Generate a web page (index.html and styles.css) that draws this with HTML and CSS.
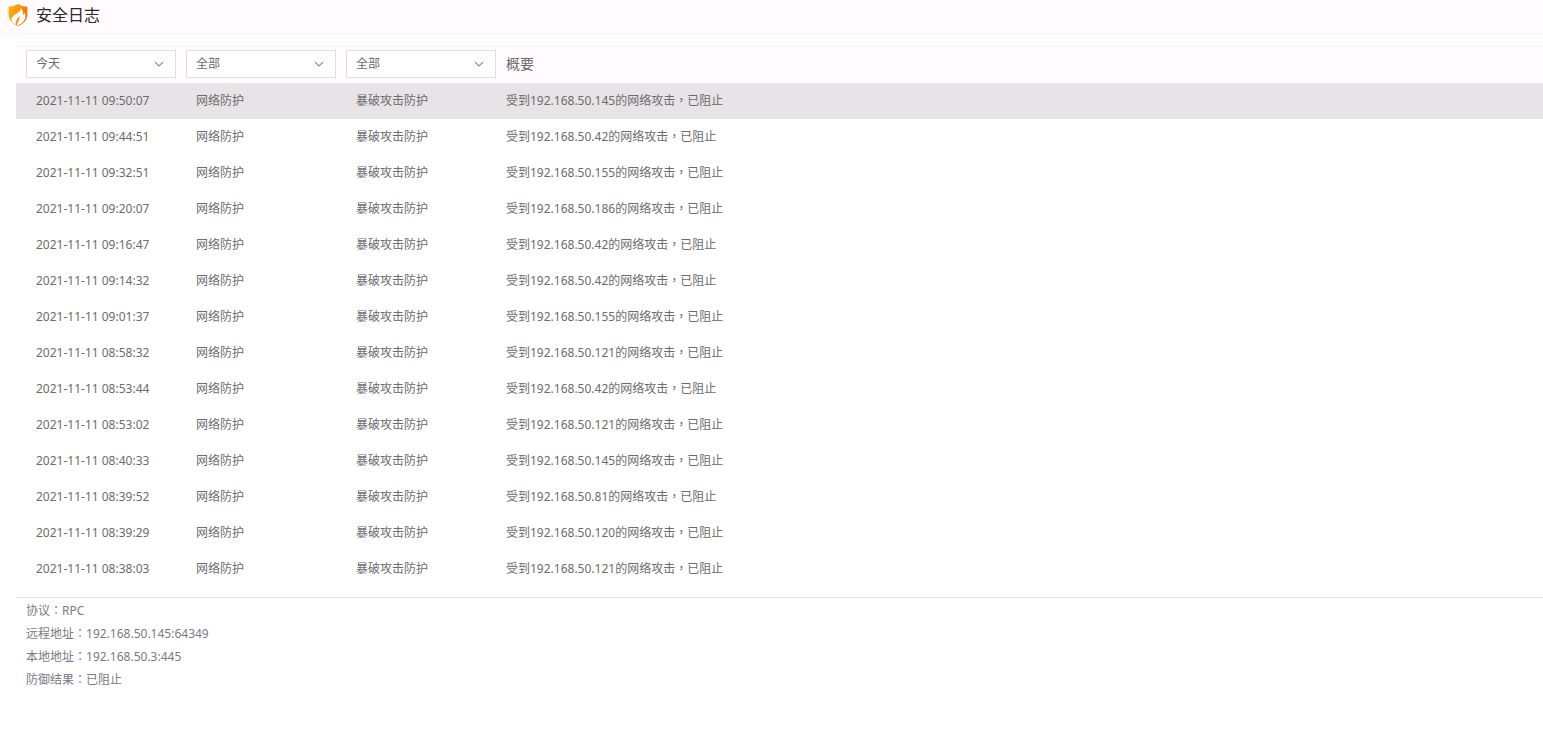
FILE: index.html
```html
<!DOCTYPE html>
<html lang="zh-CN">
<head>
<meta charset="utf-8">
<title>安全日志</title>
<link rel="stylesheet" href="styles.css">
</head>
<body>
<header class="titlebar">
  <svg class="logo" viewBox="0 0 20 22" aria-hidden="true">
    <defs>
      <linearGradient id="shield" x1="0" y1="0" x2="1" y2="0.3">
        <stop offset="0" stop-color="#ffb21a"/>
        <stop offset="0.5" stop-color="#ff9a08"/>
        <stop offset="1" stop-color="#f87300"/>
      </linearGradient>
    </defs>
    <path fill="url(#shield)" d="M10 0C13 2 16 2.6 19.4 2.6V10C19.4 16 15.5 20 10 22C4.500 20 .6 16 .6 10V2.600C4 2.600 7 2 10 0Z"/>
    <path fill="#fff" d="M12.800 4C13 7.200 10 8.600 7 10.600C3 13.500 2.600 16.500 5.200 19.200L7.800 20.800C7 17.600 8.800 15.200 11.600 12C11.800 15 11 16.400 9.800 18.200C9 19.600 8.700 20.600 9.300 21.600C14 19.800 17.400 16.500 17.400 12.600C17.400 11 17 9.600 16.400 8.600C16.200 9.800 15.800 10.400 15 11C15.200 8 14.800 5.800 12.800 4Z"/>
  </svg>
  <h1 class="title">安全日志</h1>
</header>
<main class="content">
  <table class="log">
    <colgroup><col class="col-fixed"><col class="col-fixed"><col class="col-fixed"><col></colgroup>
    <thead>
      <tr>
        <th scope="col"><select class="filter" aria-label="时间"><option>今天</option></select></th>
        <th scope="col"><select class="filter" aria-label="类型"><option>全部</option></select></th>
        <th scope="col"><select class="filter" aria-label="项目"><option>全部</option></select></th>
        <th scope="col">概要</th>
      </tr>
    </thead>
    <tbody>
      <tr class="selected"><td>2021-11-11 09:50:07</td><td>网络防护</td><td>暴破攻击防护</td><td>受到192.168.50.145的网络攻击<span class="punct" lang="zh-TW">，</span>已阻止</td></tr>
      <tr><td>2021-11-11 09:44:51</td><td>网络防护</td><td>暴破攻击防护</td><td>受到192.168.50.42的网络攻击<span class="punct" lang="zh-TW">，</span>已阻止</td></tr>
      <tr><td>2021-11-11 09:32:51</td><td>网络防护</td><td>暴破攻击防护</td><td>受到192.168.50.155的网络攻击<span class="punct" lang="zh-TW">，</span>已阻止</td></tr>
      <tr><td>2021-11-11 09:20:07</td><td>网络防护</td><td>暴破攻击防护</td><td>受到192.168.50.186的网络攻击<span class="punct" lang="zh-TW">，</span>已阻止</td></tr>
      <tr><td>2021-11-11 09:16:47</td><td>网络防护</td><td>暴破攻击防护</td><td>受到192.168.50.42的网络攻击<span class="punct" lang="zh-TW">，</span>已阻止</td></tr>
      <tr><td>2021-11-11 09:14:32</td><td>网络防护</td><td>暴破攻击防护</td><td>受到192.168.50.42的网络攻击<span class="punct" lang="zh-TW">，</span>已阻止</td></tr>
      <tr><td>2021-11-11 09:01:37</td><td>网络防护</td><td>暴破攻击防护</td><td>受到192.168.50.155的网络攻击<span class="punct" lang="zh-TW">，</span>已阻止</td></tr>
      <tr><td>2021-11-11 08:58:32</td><td>网络防护</td><td>暴破攻击防护</td><td>受到192.168.50.121的网络攻击<span class="punct" lang="zh-TW">，</span>已阻止</td></tr>
      <tr><td>2021-11-11 08:53:44</td><td>网络防护</td><td>暴破攻击防护</td><td>受到192.168.50.42的网络攻击<span class="punct" lang="zh-TW">，</span>已阻止</td></tr>
      <tr><td>2021-11-11 08:53:02</td><td>网络防护</td><td>暴破攻击防护</td><td>受到192.168.50.121的网络攻击<span class="punct" lang="zh-TW">，</span>已阻止</td></tr>
      <tr><td>2021-11-11 08:40:33</td><td>网络防护</td><td>暴破攻击防护</td><td>受到192.168.50.145的网络攻击<span class="punct" lang="zh-TW">，</span>已阻止</td></tr>
      <tr><td>2021-11-11 08:39:52</td><td>网络防护</td><td>暴破攻击防护</td><td>受到192.168.50.81的网络攻击<span class="punct" lang="zh-TW">，</span>已阻止</td></tr>
      <tr><td>2021-11-11 08:39:29</td><td>网络防护</td><td>暴破攻击防护</td><td>受到192.168.50.120的网络攻击<span class="punct" lang="zh-TW">，</span>已阻止</td></tr>
      <tr><td>2021-11-11 08:38:03</td><td>网络防护</td><td>暴破攻击防护</td><td>受到192.168.50.121的网络攻击<span class="punct" lang="zh-TW">，</span>已阻止</td></tr>
    </tbody>
  </table>
  <section class="detail">
    <p>协议<span class="punct" lang="zh-TW">：</span>RPC</p>
    <p>远程地址<span class="punct" lang="zh-TW">：</span>192.168.50.145:64349</p>
    <p>本地地址<span class="punct" lang="zh-TW">：</span>192.168.50.3:445</p>
    <p>防御结果<span class="punct" lang="zh-TW">：</span>已阻止</p>
  </section>
</main>
</body>
</html>
```
FILE: styles.css
```css
* {
  box-sizing: border-box;
}

body {
  margin: 0;
  background: #fff;
  color: #6c6c6c;
  font: 12px/20px "Noto Sans", "Noto Sans CJK SC", sans-serif;
}

.titlebar {
  display: flex;
  align-items: center;
  gap: 8px;
  height: 35px;
  padding: 0 8px 5px;
  background: #fffbff;
  border-bottom: 1px solid #f7f3f7;
}

.logo {
  width: 20px;
  height: 22px;
}

.title {
  margin: 0;
  color: #2a2a2a;
  font-size: 16px;
  font-weight: 400;
  line-height: 24px;
}

.content {
  padding: 10px 0 0 16px;
}

.log {
  width: 100%;
  border-collapse: separate;
  border-spacing: 0;
  table-layout: fixed;
}

.col-fixed {
  width: 160px;
}

.log th {
  height: 38px;
  padding: 0 0 1px 10px;
  background: #fffbff;
  border-top: 1px solid #f7f3f7;
  font-size: 14px;
  font-weight: 400;
  text-align: left;
  vertical-align: middle;
}

.log td {
  height: 36px;
  padding: 0 0 0 20px;
  white-space: nowrap;
}

.log td:last-child {
  padding-left: 10px;
}

.selected td {
  background: #e7e3e7;
}

.filter {
  display: block;
  width: 150px;
  height: 28px;
  padding: 0 24px 0 9px;
  appearance: none;
  border: 1px solid #dedfde;
  border-radius: 0;
  background: #fff url("data:image/svg+xml,%3Csvg xmlns='http://www.w3.org/2000/svg' width='10' height='6'%3E%3Cpath d='M1 1l4 4 4-4' fill='none' stroke='%23949494' stroke-width='1.200'/%3E%3C/svg%3E") no-repeat right 11px center;
  color: inherit;
  font: 12px/20px "Noto Sans", "Noto Sans CJK SC", sans-serif;
}

.detail {
  margin-top: 10px;
  padding: 1px 10px;
  border-top: 1px solid #e7e3e7;
  color: #7b7984;
  line-height: 23px;
}

.detail p {
  margin: 0;
}

.punct {
  font-family: "Noto Sans CJK TC", sans-serif;
  line-height: 1;
}
```
